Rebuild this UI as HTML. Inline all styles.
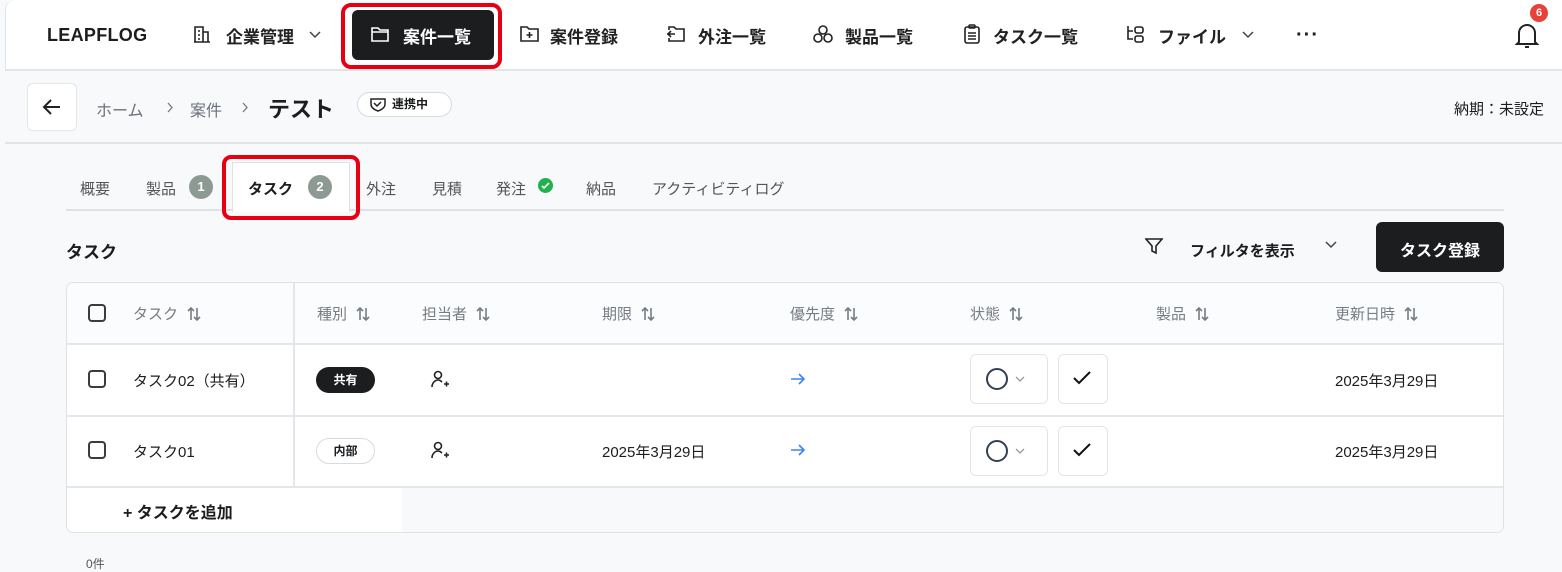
<!DOCTYPE html>
<html><head><meta charset="utf-8"><style>
*{box-sizing:border-box;margin:0;padding:0}
body{width:1562px;height:563px;overflow:hidden;background:#f8f9fb;font-family:"Liberation Sans","Noto Sans CJK JP",sans-serif;color:#1b1d1f;position:relative;font-size:15px}
.a{position:absolute;white-space:nowrap}
.nav{position:absolute;left:5px;top:0;width:1557px;height:71px;background:#fff;border-bottom:2px solid #e1e5ea;border-left:1px solid #e1e5ea;border-top-left-radius:10px}
.ni{font-size:17px;font-weight:700;color:#222;top:23px}
.hd{font-size:15px;color:#777c82;top:303px;display:flex;align-items:center;gap:8px}
.cb{position:absolute;width:18px;height:18px;border:2px solid #3a3d40;border-radius:4px}
svg{position:absolute}
.hd svg{position:static}
</style></head><body>
<div class="nav"></div>
<div class="a" style="left:47px;top:25px;font-size:18px;font-weight:700;letter-spacing:0.3px">LEAPFLOG</div>
<svg style="left:193px;top:25px" width="18" height="18" viewBox="0 0 18 18" fill="none" stroke="#222" stroke-width="1.6"><path d="M2 17V2h8v15M10 7h5v10M1 17h16M5 6h2M5 10h2M5 14h2"/></svg>
<div class="a ni" style="left:226px">企業管理</div>
<svg style="left:308px;top:30px" width="14" height="10" viewBox="0 0 14 10" fill="none" stroke="#444" stroke-width="1.5"><path d="M2 2l5 5 5-5"/></svg>
<div class="a" style="left:341px;top:3px;width:161px;height:66px;border:4px solid #e60012;border-radius:10px"></div>
<div class="a" style="left:352px;top:10px;width:142px;height:50px;background:#1b1d1f;border-radius:6px"></div>
<svg style="left:371px;top:26px" width="18" height="16" viewBox="0 0 18 16" fill="none" stroke="#fff" stroke-width="1.6"><path d="M1 2h6l2 2h8v11H1z M1 6h16"/></svg>
<div class="a ni" style="left:403px;color:#fff">案件一覧</div>
<svg style="left:520px;top:25px" width="19" height="18" viewBox="0 0 19 18" fill="none" stroke="#222" stroke-width="1.6"><path d="M1 2h6l2 2h9v12H1z M9.5 7v6M6.5 10h6"/></svg>
<div class="a ni" style="left:550px">案件登録</div>
<svg style="left:666px;top:25px" width="19" height="18" viewBox="0 0 19 18" fill="none" stroke="#222" stroke-width="1.6"><path d="M3 5V2h5l2 2h8v12H3v-3M1 9h8M5 6l-3 3 3 3"/></svg>
<div class="a ni" style="left:698px">外注一覧</div>
<svg style="left:813px;top:25px" width="20" height="19" viewBox="0 0 20 19" fill="none" stroke="#222" stroke-width="1.6"><circle cx="10" cy="5" r="4"/><circle cx="5" cy="13" r="4"/><circle cx="15" cy="13" r="4"/></svg>
<div class="a ni" style="left:845px">製品一覧</div>
<svg style="left:964px;top:24px" width="16" height="20" viewBox="0 0 16 20" fill="none" stroke="#222" stroke-width="1.6"><rect x="1" y="3" width="14" height="16" rx="2"/><rect x="5" y="1" width="6" height="3" rx="1"/><path d="M4 9h8M4 12h8M4 15h8"/></svg>
<div class="a ni" style="left:993px">タスク一覧</div>
<svg style="left:1125px;top:25px" width="20" height="19" viewBox="0 0 20 19" fill="none" stroke="#222" stroke-width="1.6"><path d="M3 1v13h5M3 6h5"/><rect x="10" y="2" width="8" height="6" rx="2"/><rect x="10" y="11" width="8" height="6" rx="2"/></svg>
<div class="a ni" style="left:1158px">ファイル</div>
<svg style="left:1241px;top:30px" width="14" height="10" viewBox="0 0 14 10" fill="none" stroke="#444" stroke-width="1.5"><path d="M2 2l5 5 5-5"/></svg>
<div class="a" style="left:1296px;top:24px;font-size:20px;font-weight:700;letter-spacing:1px">···</div>
<svg style="left:1513px;top:20px" width="28" height="30" viewBox="0 0 28 30" fill="none" stroke="#222" stroke-width="2"><path d="M6 22V13a8 8 0 0116 0v9l2 2H4z M12 27h4"/></svg>
<div class="a" style="left:1530px;top:4px;width:18px;height:18px;border-radius:9px;background:#e8403a;color:#fff;font-size:11px;font-weight:700;text-align:center;line-height:18px">6</div>

<div class="a" style="left:5px;top:142px;width:1557px;height:2px;background:#e1e5ea"></div>
<div class="a" style="left:27px;top:83px;width:50px;height:48px;background:#fff;border:1px solid #e3e6ea;border-radius:6px"></div>
<svg style="left:42px;top:98px" width="20" height="18" viewBox="0 0 20 18" fill="none" stroke="#222" stroke-width="2"><path d="M18 9H3M9 2L2 9l7 7"/></svg>
<div class="a" style="left:96px;top:97px;font-size:16px;color:#6b7178">ホーム</div>
<svg style="left:166px;top:102px" width="8" height="11" viewBox="0 0 8 11" fill="none" stroke="#777" stroke-width="1.3"><path d="M2 1l4 4.5L2 10"/></svg>
<div class="a" style="left:190px;top:97px;font-size:16px;color:#6b7178">案件</div>
<svg style="left:241px;top:102px" width="8" height="11" viewBox="0 0 8 11" fill="none" stroke="#777" stroke-width="1.3"><path d="M2 1l4 4.5L2 10"/></svg>
<div class="a" style="left:268px;top:92px;font-size:22px;font-weight:700">テスト</div>
<div class="a" style="left:357px;top:92px;width:95px;height:25px;border:1px solid #d6dbe0;border-radius:13px;background:#fff;font-size:12px;font-weight:700;padding-left:34px;line-height:23px">連携中</div>
<svg style="left:370px;top:97px" width="16" height="15" viewBox="0 0 16 15" fill="none" stroke="#222" stroke-width="1.5"><path d="M1 2h14v5c0 4-4 6-7 7C5 13 1 11 1 7z M4 6l3 3 4-4"/></svg>
<div class="a" style="left:1454px;top:98px;font-size:15px">納期：未設定</div>

<div class="a" style="left:66px;top:209px;width:1438px;height:2px;background:#dde2e7"></div>
<div class="a" style="left:80px;top:178px;font-size:15px;color:#555">概要</div>
<div class="a" style="left:146px;top:178px;font-size:15px;color:#555">製品</div>
<div class="a" style="left:189px;top:175px;width:24px;height:24px;border-radius:12px;background:#8d9a94;color:#fff;font-size:13px;font-weight:700;text-align:center;line-height:24px">1</div>
<div class="a" style="left:222px;top:155px;width:138px;height:65px;border:4px solid #e60012;border-radius:9px"></div>
<div class="a" style="left:232px;top:162px;width:118px;height:50px;background:#fff;border:1px solid #dde2e7;border-bottom:none"></div>
<div class="a" style="left:248px;top:178px;font-size:15px;font-weight:700">タスク</div>
<div class="a" style="left:308px;top:175px;width:24px;height:24px;border-radius:12px;background:#8d9a94;color:#fff;font-size:13px;font-weight:700;text-align:center;line-height:24px">2</div>
<div class="a" style="left:366px;top:178px;font-size:15px;color:#555">外注</div>
<div class="a" style="left:432px;top:178px;font-size:15px;color:#555">見積</div>
<div class="a" style="left:496px;top:178px;font-size:15px;color:#555">発注</div>
<div class="a" style="left:538px;top:178px;width:15px;height:15px;border-radius:8px;background:#22b14c"></div>
<svg style="left:541px;top:182px" width="9" height="8" viewBox="0 0 9 8" fill="none" stroke="#fff" stroke-width="1.6"><path d="M1 4l2 2 5-5"/></svg>
<div class="a" style="left:586px;top:178px;font-size:15px;color:#555">納品</div>
<div class="a" style="left:652px;top:178px;font-size:15px;color:#555">アクティビティログ</div>

<div class="a" style="left:66px;top:238px;font-size:17px;font-weight:700">タスク</div>
<svg style="left:1145px;top:237px" width="18" height="18" viewBox="0 0 18 18" fill="none" stroke="#222" stroke-width="1.6"><path d="M1 2h16l-6 7v7l-4-2V9z"/></svg>
<div class="a" style="left:1190px;top:240px;font-size:15px;font-weight:700">フィルタを表示</div>
<svg style="left:1324px;top:240px" width="14" height="10" viewBox="0 0 14 10" fill="none" stroke="#444" stroke-width="1.5"><path d="M2 2l5 5 5-5"/></svg>
<div class="a" style="left:1376px;top:222px;width:128px;height:50px;background:#1b1d1f;border-radius:6px;color:#fff;font-size:16px;font-weight:700;display:flex;align-items:center;justify-content:center;padding-top:4px">タスク登録</div>

<div class="a" style="left:66px;top:282px;width:1438px;height:251px;border:1px solid #dde2e7;border-radius:7px;background:#fff;overflow:hidden">
 <div class="a" style="left:0;top:0;width:1438px;height:62px;background:#fbfcfd;border-bottom:2px solid #e3e7eb"></div>
 <div class="a" style="left:0;top:132px;width:1438px;height:2px;background:#e3e7eb"></div>
 <div class="a" style="left:0;top:203px;width:1438px;height:2px;background:#e3e7eb"></div>
 <div class="a" style="left:335px;top:205px;width:1103px;height:50px;background:#f8f9fb"></div>
 <div class="a" style="left:226px;top:0;width:2px;height:203px;background:#e3e7eb"></div>
</div>
<div class="cb" style="left:88px;top:304px"></div>
<div class="cb" style="left:88px;top:370px"></div>
<div class="cb" style="left:88px;top:441px"></div>
<div class="a hd" style="left:133px">タスク <svg width="16" height="16" viewBox="0 0 16 16" fill="none" stroke="#777c82" stroke-width="1.6"><path d="M5 14V2M2 5l3-3 3 3M11 2v12M8 11l3 3 3-3"/></svg></div>
<div class="a hd" style="left:317px">種別 <svg width="16" height="16" viewBox="0 0 16 16" fill="none" stroke="#777c82" stroke-width="1.6"><path d="M5 14V2M2 5l3-3 3 3M11 2v12M8 11l3 3 3-3"/></svg></div>
<div class="a hd" style="left:422px">担当者 <svg width="16" height="16" viewBox="0 0 16 16" fill="none" stroke="#777c82" stroke-width="1.6"><path d="M5 14V2M2 5l3-3 3 3M11 2v12M8 11l3 3 3-3"/></svg></div>
<div class="a hd" style="left:602px">期限 <svg width="16" height="16" viewBox="0 0 16 16" fill="none" stroke="#777c82" stroke-width="1.6"><path d="M5 14V2M2 5l3-3 3 3M11 2v12M8 11l3 3 3-3"/></svg></div>
<div class="a hd" style="left:790px">優先度 <svg width="16" height="16" viewBox="0 0 16 16" fill="none" stroke="#777c82" stroke-width="1.6"><path d="M5 14V2M2 5l3-3 3 3M11 2v12M8 11l3 3 3-3"/></svg></div>
<div class="a hd" style="left:970px">状態 <svg width="16" height="16" viewBox="0 0 16 16" fill="none" stroke="#777c82" stroke-width="1.6"><path d="M5 14V2M2 5l3-3 3 3M11 2v12M8 11l3 3 3-3"/></svg></div>
<div class="a hd" style="left:1156px">製品 <svg width="16" height="16" viewBox="0 0 16 16" fill="none" stroke="#777c82" stroke-width="1.6"><path d="M5 14V2M2 5l3-3 3 3M11 2v12M8 11l3 3 3-3"/></svg></div>
<div class="a hd" style="left:1335px">更新日時 <svg width="16" height="16" viewBox="0 0 16 16" fill="none" stroke="#777c82" stroke-width="1.6"><path d="M5 14V2M2 5l3-3 3 3M11 2v12M8 11l3 3 3-3"/></svg></div>

<div class="a" style="left:133px;top:370px;font-size:15px">タスク02（共有）</div>
<div class="a" style="left:316px;top:367px;width:59px;height:26px;border-radius:13px;background:#1b1d1f;color:#fff;font-size:12px;font-weight:700;text-align:center;line-height:26px">共有</div>
<div class="a" style="left:133px;top:441px;font-size:15px">タスク01</div>
<div class="a" style="left:316px;top:438px;width:59px;height:26px;border-radius:13px;border:1px solid #d6dbe0;background:#fff;font-size:12px;font-weight:700;text-align:center;line-height:24px">内部</div>
<svg style="left:431px;top:370px" width="20" height="20" viewBox="0 0 20 20" fill="none" stroke="#222" stroke-width="1.6"><circle cx="7" cy="5" r="3.5"/><path d="M1 17c0-4 3-7 6-7 2 0 3 1 4 2M13 14h5M15.5 11.5v5"/></svg>
<svg style="left:431px;top:441px" width="20" height="20" viewBox="0 0 20 20" fill="none" stroke="#222" stroke-width="1.6"><circle cx="7" cy="5" r="3.5"/><path d="M1 17c0-4 3-7 6-7 2 0 3 1 4 2M13 14h5M15.5 11.5v5"/></svg>
<div class="a" style="left:602px;top:441px;font-size:15px">2025年3月29日</div>
<svg style="left:790px;top:372px" width="16" height="14" viewBox="0 0 16 14" fill="none" stroke="#3b82f6" stroke-width="1.6"><path d="M1 7h13M9 2l5 5-5 5"/></svg>
<svg style="left:790px;top:443px" width="16" height="14" viewBox="0 0 16 14" fill="none" stroke="#3b82f6" stroke-width="1.6"><path d="M1 7h13M9 2l5 5-5 5"/></svg>

<div class="a" style="left:970px;top:354px;width:78px;height:50px;border:1px solid #e1e5ea;border-radius:6px;background:#fff"></div>
<div class="a" style="left:986px;top:368px;width:22px;height:22px;border:2.5px solid #334155;border-radius:50%"></div>
<svg style="left:1014px;top:375px" width="12" height="8" viewBox="0 0 12 8" fill="none" stroke="#999" stroke-width="1.3"><path d="M2 2l4 4 4-4"/></svg>
<div class="a" style="left:1058px;top:354px;width:50px;height:50px;border:1px solid #e1e5ea;border-radius:6px;background:#fff"></div>
<svg style="left:1072px;top:370px" width="20" height="16" viewBox="0 0 20 16" fill="none" stroke="#111" stroke-width="2"><path d="M2 8l5 5 11-11"/></svg>
<div class="a" style="left:970px;top:426px;width:78px;height:50px;border:1px solid #e1e5ea;border-radius:6px;background:#fff"></div>
<div class="a" style="left:986px;top:440px;width:22px;height:22px;border:2.5px solid #334155;border-radius:50%"></div>
<svg style="left:1014px;top:447px" width="12" height="8" viewBox="0 0 12 8" fill="none" stroke="#999" stroke-width="1.3"><path d="M2 2l4 4 4-4"/></svg>
<div class="a" style="left:1058px;top:426px;width:50px;height:50px;border:1px solid #e1e5ea;border-radius:6px;background:#fff"></div>
<svg style="left:1072px;top:442px" width="20" height="16" viewBox="0 0 20 16" fill="none" stroke="#111" stroke-width="2"><path d="M2 8l5 5 11-11"/></svg>

<div class="a" style="left:1335px;top:370px;font-size:15px">2025年3月29日</div>
<div class="a" style="left:1335px;top:441px;font-size:15px">2025年3月29日</div>
<div class="a" style="left:123px;top:499px;font-size:16px;font-weight:700">+ タスクを追加</div>
<div class="a" style="left:86px;top:555px;font-size:12px;color:#555">0件</div>
</body></html>
